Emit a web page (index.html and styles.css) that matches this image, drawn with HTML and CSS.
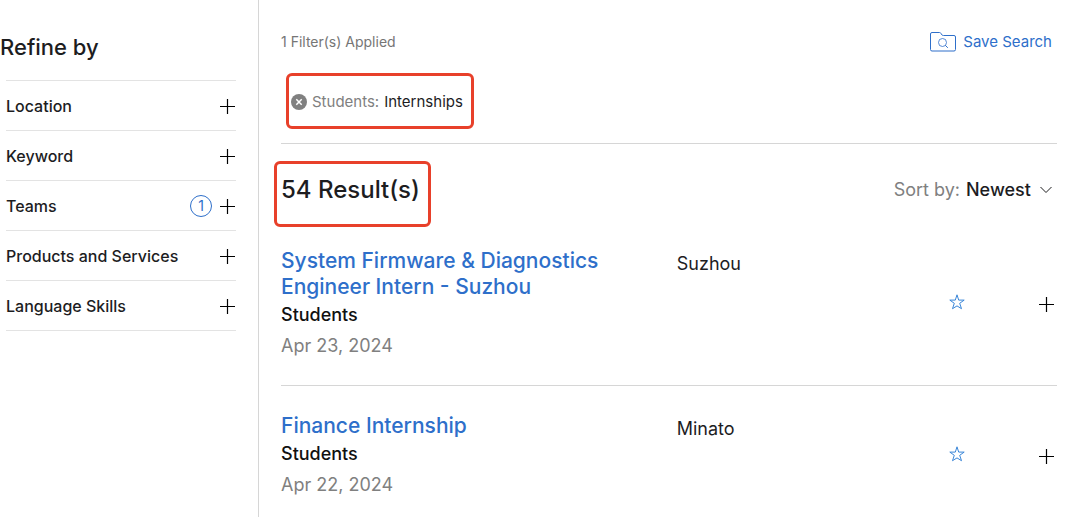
FILE: index.html
```html
<!DOCTYPE html>
<html lang="en">
<head>
    <meta charset="UTF-8">
    <meta name="viewport" content="width=device-width, initial-scale=1.0">
    <title>Job Search</title>
    <link rel="stylesheet" href="styles.css">
</head>
<body>

    <!-- Shared icons -->
    <svg class="sprite" aria-hidden="true">
        <symbol id="icon-plus" viewBox="0 0 16 16">
            <path d="M8.5 1v15M1 8.5h15" fill="none" stroke="currentColor" stroke-width="1.2"/>
        </symbol>
        <symbol id="icon-star" viewBox="0 0 16 16">
            <path d="M8 .8l1.7 5.3h5.5l-4.500 3.200 1.800 5.400L8 11.900l-4.500 2.800 1.800-5.400L.8 6.100h5.500z" fill="none" stroke="currentColor" stroke-width="1"/>
        </symbol>
    </svg>

    <div class="layout">
        <aside class="sidebar">
            <h2>Refine by</h2>
            <ul class="filters">
                <li><button type="button" class="filter-button">Location
                    <svg class="icon"><use href="#icon-plus"/></svg></button></li>
                <li><button type="button" class="filter-button">Keyword
                    <svg class="icon"><use href="#icon-plus"/></svg></button></li>
                <li><button type="button" class="filter-button">Teams
                    <span class="count">1</span>
                    <svg class="icon"><use href="#icon-plus"/></svg></button></li>
                <li><button type="button" class="filter-button">Products and Services
                    <svg class="icon"><use href="#icon-plus"/></svg></button></li>
                <li><button type="button" class="filter-button">Language Skills
                    <svg class="icon"><use href="#icon-plus"/></svg></button></li>
            </ul>
        </aside>

        <main class="content">
            <div class="topbar">
                <span class="applied">1 Filter(s) Applied</span>
                <a href="#save" class="save-search">
                    <svg class="folder" viewBox="0 0 26 20" fill="none" stroke="currentColor">
                        <path d="M.5 17.500v-15.500q0-1.500 1.500-1.500h7.500q1 0 1.500 1l1 1.500q.5.500 1.500.500h10.500q1.500 0 1.500 1.500v12.500q0 1.500-1.500 1.500h-22q-1.500 0-1.500-1.500z"/>
                        <circle cx="12.500" cy="10.500" r="4" stroke-width=".8"/>
                        <path d="M15.300 13.300l2.500 2.500" stroke-width="1"/>
                    </svg>
                    Save Search
                </a>
            </div>

            <div class="chip-row">
                <div class="chip highlight">
                    <button type="button" class="remove" aria-label="Remove filter">
                        <svg viewBox="0 0 16 16">
                            <circle cx="8" cy="8" r="8" fill="#808080"/>
                            <path d="M5.300 5.300l5.400 5.400M10.700 5.300l-5.400 5.400" stroke="#fff" stroke-width="1.500"/>
                        </svg>
                    </button>
                    <span class="chip-label">Students:</span>
                    <span>Internships</span>
                </div>
            </div>

            <div class="results-bar">
                <h1 class="highlight">54 Result(s)</h1>
                <div class="sort">
                    <label for="sort">Sort by:</label>
                    <select id="sort">
                        <option>Newest</option>
                        <option>Relevance</option>
                    </select>
                    <svg class="chevron" viewBox="0 0 12 8"><path d="M.5 1L6 6.500 11.500 1" fill="none" stroke="currentColor"/></svg>
                </div>
            </div>

            <table class="results">
                <tr>
                    <td class="job">
                        <a href="#job1">System Firmware &amp; Diagnostics Engineer Intern - Suzhou</a>
                        <div class="team">Students</div>
                        <div class="date">Apr 23, 2024</div>
                    </td>
                    <td class="place">Suzhou</td>
                    <td class="actions">
                        <div>
                            <button type="button" class="star" aria-label="Add to favorites"><svg class="icon"><use href="#icon-star"/></svg></button>
                            <button type="button" aria-label="Show details"><svg class="icon"><use href="#icon-plus"/></svg></button>
                        </div>
                    </td>
                </tr>
                <tr>
                    <td class="job">
                        <a href="#job2">Finance Internship</a>
                        <div class="team">Students</div>
                        <div class="date">Apr 22, 2024</div>
                    </td>
                    <td class="place">Minato</td>
                    <td class="actions">
                        <div>
                            <button type="button" class="star" aria-label="Add to favorites"><svg class="icon"><use href="#icon-star"/></svg></button>
                            <button type="button" aria-label="Show details"><svg class="icon"><use href="#icon-plus"/></svg></button>
                        </div>
                    </td>
                </tr>
            </table>
        </main>
    </div>

</body>
</html>
```
FILE: styles.css
```css
* {
    box-sizing: border-box;
}

body {
    margin: 0;
    font-family: Inter, "Liberation Sans", sans-serif;
    font-size: 18px;
    line-height: 24px;
    color: #1d1d1f;
    background: #fff;
}

button, select {
    font: inherit;
    color: inherit;
    background: none;
    border: 0;
    padding: 0;
    cursor: pointer;
}

a {
    color: #2e6fca;
    text-decoration: none;
}

h1, h2 {
    margin: 0;
    font-size: 24px;
    font-weight: 500;
    line-height: 32px;
}

h2 {
    font-size: 22px;
}

.sprite {
    display: none;
}

.icon {
    display: block;
    width: 16px;
    height: 16px;
}

.layout {
    display: flex;
    min-height: 100vh;
}

/* Sidebar */
.sidebar {
    width: 259px;
    flex-shrink: 0;
    padding: 31px 22px 0 0;
    border-right: 1px solid #d6d6d6;
}

.filters {
    list-style: none;
    margin: 17px 0 0 6px;
    padding: 0;
    border-top: 1px solid #e3e3e3;
}

.filters li {
    border-bottom: 1px solid #e3e3e3;
}

.filter-button {
    display: flex;
    align-items: center;
    width: 100%;
    height: 49px;
    padding-right: 1px;
    font-size: 16px;
    font-weight: 500;
}

.filter-button .icon {
    margin-left: auto;
    color: #000;
}

.count {
    width: 22px;
    margin-left: auto;
    border: 1px solid #2e6fca;
    border-radius: 50%;
    font-size: 14px;
    font-weight: 400;
    line-height: 20px;
    color: #2e6fca;
}

.filter-button .count + .icon {
    margin-left: 7px;
}

/* Content */
.content {
    flex: 1;
    padding: 30px 23px 0 22px;
}

.topbar {
    display: flex;
    justify-content: space-between;
    align-items: center;
    padding-right: 5px;
}

.applied {
    font-size: 14px;
    color: #767676;
}

.save-search {
    display: flex;
    align-items: center;
    gap: 7px;
    font-size: 15px;
}

.folder {
    width: 26px;
    height: 20px;
}

.highlight {
    border: 3px solid #e8402a;
    border-radius: 6px;
}

.chip-row {
    display: flex;
    padding: 19px 0 14px 5px;
    border-bottom: 1px solid #d6d6d6;
}

.chip {
    display: flex;
    align-items: center;
    gap: 5px;
    height: 56px;
    padding: 1px 8px 0 2px;
    font-size: 15px;
}

.chip-label {
    color: #808080;
}

.remove svg {
    display: block;
    width: 16px;
    height: 16px;
}

.results-bar {
    display: flex;
    justify-content: space-between;
    align-items: flex-start;
    padding: 17px 5px 0 0;
}

.results-bar h1 {
    margin-left: -7px;
    padding: 10px 8px 18px 4px;
}

.sort {
    position: relative;
    display: flex;
    gap: 6px;
    margin-top: 17px;
}

.sort label {
    color: #808080;
}

.sort select {
    appearance: none;
    width: 86px;
    font-weight: 500;
}

.chevron {
    position: absolute;
    right: 0;
    top: 8px;
    width: 12px;
    height: 8px;
    pointer-events: none;
}

/* Job list */
.results {
    width: 100%;
    border-collapse: collapse;
}

.results td {
    padding: 27px 0;
    vertical-align: top;
}

.results tr:first-child td {
    padding-top: 21px;
    border-bottom: 1px solid #d6d6d6;
}

.results tr:last-child td {
    padding-bottom: 0;
}

.job {
    width: 51%;
}

.results .job {
    padding-right: 70px;
}

.job a {
    display: block;
    font-size: 21px;
    font-weight: 500;
    line-height: 26px;
}

.team {
    margin-top: 3px;
    font-weight: 500;
    color: #111;
}

.date {
    margin-top: 7px;
    color: #808080;
}

.place {
    line-height: 32px;
}

.results .actions {
    vertical-align: middle;
}

.actions div {
    display: flex;
    justify-content: flex-end;
    align-items: flex-end;
    gap: 73px;
    padding-right: 3px;
    color: #000;
}

.actions .star {
    padding-bottom: 2px;
    color: #3a86d8;
}
```
